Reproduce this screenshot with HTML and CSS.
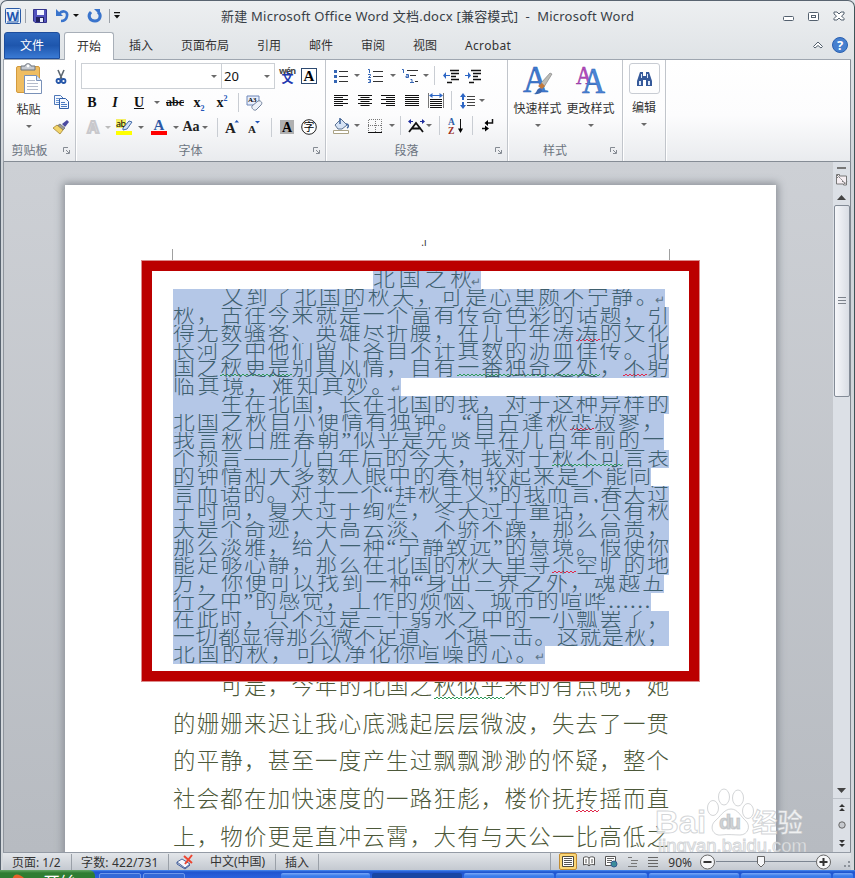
FILE: index.html
```html
<!DOCTYPE html>
<html lang="zh-CN">
<head>
<meta charset="utf-8">
<title>Microsoft Word</title>
<link rel="stylesheet" href="styles.css">
</head>
<body>
<div class="window">
  <header class="titlebar">
    <div class="quick">
      <svg width="16" height="16"><rect x=".5" y=".5" width="15" height="15" rx="1" fill="#e9f2fc" stroke="#2a5aa5"/><path d="M13 2v12M2 14h11" stroke="#2a5aa5"/><text x="1.5" y="12.5" font-size="13" font-weight="bold" fill="#1c55b0" textLength="12" lengthAdjust="spacingAndGlyphs">W</text></svg>
      <i class="qsep"></i>
      <svg width="14" height="14"><path d="M.5.5h13v13H2L.5 12z" fill="#5353bd" stroke="#34348c"/><path d="M4 1h7v5H4z" fill="#f3f5ff"/><path d="M3 8h8v5H3z" fill="#23235f"/><path d="M7 9h3v4H7z" fill="#e9ecfa"/></svg>
      <svg width="22" height="14"><path d="M0 0v7h7z" fill="#3a74cc"/><path d="M3 5C7 0 12 3 11 7c-.5 3-3 5-6 5" fill="none" stroke="#3a74cc" stroke-width="2.6"/><path d="M17 5h6l-3 3z" fill="#111"/></svg>
      <svg width="14" height="14"><path d="M6 0h6v6z" fill="#3a74cc"/><path d="M3 3C-1 7 2 12 7 12c5 0 7-6 3-9" fill="none" stroke="#3a74cc" stroke-width="3"/></svg>
      <i class="qsep"></i>
      <svg width="8" height="8" class="more"><path d="M1 0h6v1.3H1zM1 3h6L4 6.500z" fill="#111"/></svg>
    </div>
    <div class="title">新建 Microsoft Office Word 文档.docx [兼容模式]&nbsp; -&nbsp; Microsoft Word</div>
    <div class="controls">
      <svg width="12" height="12"><rect x=".5" y="6.500" width="10" height="4" rx="1" fill="#fff" stroke="#53606e"/></svg>
      <svg width="12" height="12"><rect x=".5" y="2.500" width="10" height="8" rx="1" fill="#fff" stroke="#53606e"/><rect x="3.500" y="5.500" width="4" height="2" fill="#fff" stroke="#53606e"/></svg>
      <svg width="12" height="12"><path d="M1 2h3l2 2 2-2h3v2L8.500 6 11 8.500V10H8L6 8l-2 2H1V8.500L3.500 6 1 4z" fill="#fff" stroke="#53606e"/></svg>
    </div>
  </header>
  <nav class="tabs">
    <span class="file">文件</span><span class="tab active">开始</span><span class="tab">插入</span><span class="tab">页面布局</span><span class="tab">引用</span><span class="tab">邮件</span><span class="tab">审阅</span><span class="tab">视图</span><span class="tab acro">Acrobat</span>
    <div class="help">
      <svg width="10" height="8"><path d="M.5 5.500L5 1l4.500 4.500L8 7 5 4.500 2 7z" fill="#fff" stroke="#53606e"/></svg>
      <svg width="16" height="16"><circle cx="8" cy="8" r="7.500" fill="#4680cf" stroke="#2a60b0"/><text x="8" y="13" font-size="13" font-weight="bold" fill="#fff" text-anchor="middle">?</text></svg>
    </div>
  </nav>
  <section class="ribbon">
    <div class="group clip">
      <div class="cliprow">
        <div class="paste">
          <svg width="26" height="30"><rect x=".5" y="2.500" width="23" height="26" rx="1.500" fill="#efbd62" stroke="#d39a3d"/><path d="M5 2h4c0-3 6-3 6 0h4v4H5z" fill="#c5c9d0" stroke="#6d747e"/><circle cx="12" cy="2" r="1.400" fill="#fff"/><path d="M8.500 11.500h12l5 5v13h-17z" fill="#fff" stroke="#7991b8"/><path d="M20.500 11.500v5h5" fill="#dbe6f5" stroke="#7991b8"/><path d="M11 16.500h8M11 19.500h11M11 22.500h11M11 25.500h11" stroke="#b5bccb"/></svg>
          <span>粘贴</span><i class="arr"></i>
        </div>
        <div class="cliptools">
          <svg width="10" height="14"><path d="M2 0l4 9M8 0L4 9" stroke="#5c6670" stroke-width="1.600"/><circle cx="2.500" cy="11" r="2" fill="none" stroke="#2455a8" stroke-width="1.800"/><circle cx="7.500" cy="11" r="2" fill="none" stroke="#2455a8" stroke-width="1.800"/></svg>
          <svg width="15" height="14"><path d="M.5.5h6l3 3v6h-9z" fill="#f4f8ff" stroke="#4f78b8"/><path d="M2 3.500h3M2 5.500h4M2 7.500h4" stroke="#6d96d2"/><path d="M5.500 3.500h6l3 3v7h-9z" fill="#f4f8ff" stroke="#2f5ea8"/><path d="M7 7.500h4M7 9.500h6M7 11.500h6" stroke="#4a7ac2"/></svg>
          <svg width="16" height="14"><path d="M9 4l5-4 2 2-4 5z" fill="#4a4aa0"/><path d="M7 4l5 4-2 2-6-4z" fill="#999" stroke="#555" stroke-width=".6"/><path d="M4 5l6 5-3 4-7-6z" fill="#f2d469" stroke="#9a7a28" stroke-width=".7"/></svg>
        </div>
      </div>
      <div class="gname"><span>剪贴板</span><svg class="launch" width="7" height="7"><path d="M.5 5V.5H5M3 3l3 3M6.500 3v3.500H3" fill="none" stroke="#858b93"/></svg></div>
    </div>
    <div class="group font">
      <div class="row fr1"><div class="combo"><i class="arr"></i></div><div class="combo"><span>20</span><i class="arr"></i></div>
        <svg width="17" height="16"><text x="0" y="5.500" font-size="9" font-weight="bold" fill="#444" textLength="17">wén</text><text x="2.500" y="15" font-size="12" font-weight="bold" fill="#2038b0" class="cjk">文</text></svg>
        <svg width="16" height="16"><rect x=".5" y=".5" width="15" height="15" fill="#fff" stroke="#2d4a70"/><text x="8" y="13" font-size="15" font-weight="bold" text-anchor="middle" class="serif">A</text></svg></div>
      <div class="row fr2 serif"><b>B</b><b><em>I</em></b><b><u>U</u></b><i class="arr"></i><b class="abc">abc</b><b class="xs">x<sub>2</sub></b><b class="xs">x<sup>2</sup></b><i class="vsep"></i>
        <svg width="17" height="16"><path d="M1 1h12v6l-5 3H1z" fill="#e8eefc" stroke="#6c86b8"/><text x="2" y="7" font-size="7" font-weight="bold">A3</text><path d="M6 11l6-5c3-1 5 2 3 4l-5 5c-2 1-5-2-4-4z" fill="#edf1f8" stroke="#71819c"/></svg></div>
      <div class="row fr3">
        <svg width="14" height="15"><text x="7" y="13" font-size="16" font-weight="bold" text-anchor="middle" fill="#fff" stroke="#c8c8cc" stroke-width="2">A</text></svg><i class="arr pale"></i>
        <svg width="17" height="16"><path d="M0 0h10v9H0z" fill="#f3ee63"/><text x="0" y="7.500" font-size="9" textLength="10">ab</text><path d="M7 9l6-7 3 1-5 7-4 1z" fill="#d0e1f8" stroke="#436ba8"/><path d="M0 12h16v4H0z" fill="#ff0"/></svg><i class="arr"></i>
        <svg width="16" height="16"><text x="8" y="10.500" font-size="15" font-weight="bold" text-anchor="middle" fill="#2c58a5" class="serif">A</text><path d="M0 12h16v4H0z" fill="#f00"/></svg><i class="arr"></i>
        <span class="case serif"><b>Aa</b><i class="arr"></i></span><i class="vsep"></i>
        <svg width="14" height="14"><text x="0" y="13" font-size="15" font-weight="bold" fill="#222" class="serif">A</text><path d="M9.500 2.500L11.700 0 14 2.500z" fill="#2255b8"/></svg>
        <svg width="12" height="14"><text x="0" y="13" font-size="11" font-weight="bold" fill="#222" class="serif">A</text><path d="M7 1h5L9.500 3.500z" fill="#2255b8"/></svg><i class="vsep"></i>
        <svg width="14" height="14"><path d="M0 0h14v14H0z" fill="#b0b0b0"/><text x="7" y="12" font-size="14" font-weight="bold" text-anchor="middle" class="serif">A</text></svg>
        <svg width="16" height="16"><circle cx="8" cy="8" r="7.300" fill="#fff" stroke="#222"/><text x="8" y="12" font-size="11" text-anchor="middle" class="cjk">字</text></svg></div>
      <div class="gname"><span>字体</span><svg class="launch" width="7" height="7"><path d="M.5 5V.5H5M3 3l3 3M6.500 3v3.500H3" fill="none" stroke="#858b93"/></svg></div>
    </div>
    <div class="group para">
      <div class="row pr1">
        <svg width="14" height="14"><path d="M5 2.500h9M5 7.500h9M5 12.500h9" stroke="#333"/><path d="M0 1h3v3H0zM0 6h3v3H0zM0 11h3v3H0z" fill="#3465b4"/></svg><i class="arr"></i>
        <svg width="15" height="14"><path d="M5 2.500h10M5 7.500h10M5 12.500h10" stroke="#333"/><path d="M0 .5h1.500V4M0 5.500h2.500v1L.5 8.500h2.500M0 10.500h2.500v3H0M1 12h1.500" fill="none" stroke="#3465b4"/></svg><i class="arr"></i>
        <svg width="16" height="14"><path d="M5 1.500h11M8 6.500h6M13 12.500h3" stroke="#333"/><path d="M0 .5h1.500V4M4 5.500h2.500v3H4v-1.500h2M8.500 10.500h1.500V14M8 13.500h4" fill="none" stroke="#3465b4"/></svg><i class="arr"></i><i class="vsep"></i>
        <svg width="16" height="14"><path d="M7 1.500h9M8 4.500h8M8 7.500h5M8 10.500h8M4 13.500h5" stroke="#111" stroke-width="1.500"/><path d="M7 6H3V3L0 6.500 3 10V7h4z" fill="#2d66c5"/></svg>
        <svg width="16" height="14"><path d="M6 1.500h10M8 4.500h8M8 7.500h5M8 10.500h8M4 13.500h5" stroke="#111" stroke-width="1.500"/><path d="M0 6h3V3l3 3.500L3 10V7H0z" fill="#2d66c5"/></svg></div>
      <div class="row pr2">
        <svg width="14" height="12"><path d="M0 .5h14M0 2.500h9M0 4.500h14M0 6.500h9M0 8.500h14M0 10.500h9" stroke="#111"/></svg>
        <svg width="14" height="12"><path d="M0 .5h14M2.500 2.500h9M0 4.500h14M2.500 6.500h9M0 8.500h14M2.500 10.500h9" stroke="#111"/></svg>
        <svg width="14" height="12"><path d="M0 .5h14M5 2.500h9M0 4.500h14M5 6.500h9M0 8.500h14M5 10.500h9" stroke="#111"/></svg>
        <svg width="14" height="12"><path d="M0 .5h14M0 2.500h14M0 4.500h14M0 6.500h14M0 8.500h14M0 10.500h14" stroke="#111"/></svg>
        <svg width="16" height="15"><path d="M.5 0v15M15.500 0v15" stroke="#777"/><path d="M2 6.500h12M2 8.500h12M2 10.500h12M2 12.500h12M2 14.500h12" stroke="#111"/><path d="M1 2.500L4.500 0v2h7V0L15 2.500 11.500 5V3h-7v2z" fill="#2d66c5"/></svg><i class="vsep"></i>
        <svg width="15" height="16"><path d="M7 3.500h8M7 6.500h8M7 9.500h8M7 12.500h8" stroke="#444"/><path d="M3 0l3 4H4v3H2V4H0zM3 16l3-4H4V9H2v3H0z" fill="#2d66c5"/></svg><i class="arr"></i></div>
      <div class="row pr3">
        <svg width="16" height="16"><path d="M2 7l6-6 6 6-5 4H5z" fill="#d6e3f5" stroke="#5c7292"/><path d="M7 6V0M13 6c3 0 3 3 1 4" stroke="#3d6299" fill="none" stroke-width="1.500"/><path d="M.5 12.500h15v3H.5z" fill="#fff" stroke="#aaa284"/></svg><i class="arr"></i>
        <svg width="14" height="14"><path d="M.5 14V.5h13V14M7.500 0v14M0 6.500h14" fill="none" stroke="#777" stroke-dasharray="1 1"/><path d="M0 13.500h14" stroke="#111"/></svg><i class="arr"></i><i class="vsep"></i>
        <svg width="17" height="14"><path d="M1 13l7-9 7 9M4 9.500h9" fill="none" stroke="#111" stroke-width="1.800"/><path d="M0 2.500L3 0v2h2v1H3v2zM17 2.500L14 0v2h-2v1h2v2z" fill="#1e2d9c"/></svg><i class="arr"></i><i class="vsep"></i>
        <svg width="16" height="16"><text x="0" y="7" font-size="9.500" font-weight="bold" fill="#2d5da8" class="serif">A</text><text x="0" y="15.500" font-size="9.500" font-weight="bold" fill="#9b2d22" class="serif">Z</text><path d="M12.500 1v12" stroke="#111"/><path d="M10 10.500h5L12.500 15z"/></svg><i class="vsep"></i>
        <svg width="12" height="13"><path d="M10.500 0v4H6M0 9.500h5" fill="none" stroke="#111" stroke-width="1.500"/><path d="M6 1v6L2.500 4zM3 6.500v6L7 9.500z"/></svg></div>
      <div class="gname"><span>段落</span><svg class="launch" width="7" height="7"><path d="M.5 5V.5H5M3 3l3 3M6.500 3v3.500H3" fill="none" stroke="#858b93"/></svg></div>
    </div>
    <div class="group style">
      <div class="bigs">
        <div class="big"><svg width="30" height="32"><text x="0" y="27" font-size="37" fill="#3f7bd0" stroke="#2e62b4" stroke-width=".6" textLength="25" lengthAdjust="spacingAndGlyphs" class="serif">A</text><path d="M18 18l9-10 2 1-8 13z" fill="#bcbcb6" stroke="#77777a" stroke-width=".6"/><path d="M10 29c4 0 3-5 7-6 4 2 2 7-7 6z" fill="#3a68b0"/><path d="M15 21l4-3 3 3-3 3z" fill="#c2793a"/></svg><span>快速样式</span><i class="arr"></i></div>
        <div class="big"><svg width="30" height="32"><text x="0" y="19" font-size="25" fill="#b64bc0" stroke="#8e3499" stroke-width=".5" textLength="16" lengthAdjust="spacingAndGlyphs" class="serif">A</text><text x="6" y="28" font-size="36" fill="#4b86d8" stroke="#2e62b4" stroke-width=".6" textLength="23" lengthAdjust="spacingAndGlyphs" class="serif">A</text></svg><span>更改样式</span><i class="arr"></i></div>
      </div>
      <div class="gname"><span>样式</span><svg class="launch" width="7" height="7"><path d="M.5 5V.5H5M3 3l3 3M6.500 3v3.500H3" fill="none" stroke="#858b93"/></svg></div>
    </div>
    <div class="group edit">
      <div class="editbox"><svg width="15" height="14"><path d="M3 0h3v4h3V0h3l3 9v5H9V8H6v6H0V9z" fill="#35599a"/><path d="M2 9h2v4H2zM11 9h2v4h-2zM4 2h1v4H4zM10 2h1v4h-1z" fill="#dce8fa"/></svg></div>
      <span>编辑</span><i class="arr"></i>
    </div>
  </section>
  <main class="work">
    <div class="canvas">
      <article class="page">
        <div class="header-mark">.ı</div>
        <div class="margin-marks"></div>
        <div class="text selected">
          <p class="title-line">北国之秋<i class="ret">↵</i></p>
          <p class="w492">　　又到了北国的秋天，可是心里颇不宁静。<i class="ret">↵</i></p>
          <p>秋，古往今来就是一个富有传奇色彩的话题，引</p>
          <p>得无数骚客、英雄尽折腰，在几十年涛<s class="red">涛</s>的文化</p>
          <p>长河之中他们留下各自不计其数的沥血佳传。北</p>
          <p>国之<s>秋更是</s>别具风情，自有<s>一番独奇之处</s>，<s class="red">不</s>躬</p>
          <p class="w228">临其境，难知其妙。<i class="ret">↵</i></p>
          <p>　　生在北国，长在北国的我，对于这种异样的</p>
          <p class="w491">北国之秋自小便情有独钟。“自古逢秋<s class="red">悲</s>寂寥，</p>
          <p class="w491">我言秋日胜春朝”似乎是先贤早在几百年前的一</p>
          <p>个预言——几百年后的今天，我对于<s>秋不可</s>言表</p>
          <p class="w478">的钟情和大多数人眼中的春相较起来是不能同</p>
          <p>言而语的。对于一个“拜秋主义”的我而言,春天过</p>
          <p>于时尚，夏天过于绚烂，冬天过于童话，只有秋</p>
          <p>天是个奇迹，天高云淡、不骄不躁，那么高贵，</p>
          <p>那么淡雅，给人一种“宁静致远”的意境。假使你</p>
          <p>能足够心静，那么在北国的秋天里寻<s class="red">个</s>空旷的地</p>
          <p class="w491">方，你便可以找到一种“身出三界之外，魂越五</p>
          <p class="w478">行之中”的感觉，工作的烦恼、城市的喧哗……</p>
          <p>在此时，只不过是三千弱水之中的一小瓢罢了，</p>
          <p>一切都显得那么微不足道、不堪一击。这就是秋，</p>
          <p class="w372">北国的秋，可以净化你喧噪的心。<i class="ret">↵</i></p>
        </div>
        <div class="text loose">
          <p>　　可是，今年的北国之<s>秋似乎</s>来的有点晚，她</p>
          <p>的姗姗来迟让我心底溅起层层微波，失去了一贯</p>
          <p>的平静，甚至一度产生过飘飘渺渺的怀疑，整个</p>
          <p>社会都在加快速度的一路狂彪，楼价抚<s class="red">抟</s>摇而直</p>
          <p>上，物价更是直冲云霄，大有与天公一比高低之</p>
        </div>
        <div class="frame"></div>
      </article>
    </div>
    <aside class="scroll">
      <div class="split"></div>
      <svg class="ruler" width="13" height="13"><path d="M1.500 3V1.500h3V3h7v9H8.500v-1h-7z" fill="#f5eef2" stroke="#777"/><path d="M2 2l8 8M7 8l3 3 2-3M2 5l3-3" fill="none" stroke="#777" stroke-dasharray="2 1"/></svg>
      <svg class="up" width="9" height="5"><path d="M0 5l4.500-5L9 5z" fill="#444"/></svg>
      <div class="thumb"><svg width="8" height="8"><path d="M0 .5h8M0 3.500h8M0 6.500h8" stroke="#7d838c"/></svg></div>
      <svg class="down" width="9" height="5"><path d="M0 0l4.500 5L9 0z" fill="#444"/></svg>
      <div class="browse">
        <svg width="6" height="8"><path d="M0 3l3-3 3 3zM0 7l3-3 3 3z" fill="#333"/></svg>
        <svg width="8" height="8"><circle cx="4" cy="4" r="3.200" fill="#c6c9ce" stroke="#666"/></svg>
        <svg width="6" height="8"><path d="M0 1l3 3 3-3zM0 5l3 3 3-3z" fill="#333"/></svg>
      </div>
    </aside>
    <svg class="watermark" width="156" height="74">
      <g fill="#fff" stroke="#b5b9bd" stroke-opacity=".6" fill-opacity=".8">
        <ellipse cx="58" cy="21" rx="5.500" ry="7.500"/><ellipse cx="69" cy="10" rx="5.500" ry="8"/><ellipse cx="83" cy="11" rx="5.500" ry="8"/><ellipse cx="93" cy="24" rx="5.500" ry="7.500"/>
        <path d="M76 22c7 0 10 8 15 12 5 5 2 14-6 14-5 0-12-1-19 0-8 1-12-8-6-14 5-4 9-12 16-12z"/>
        <text x="0" y="46" font-size="32" font-weight="bold" textLength="51" lengthAdjust="spacingAndGlyphs" class="mark">Bai</text>
        <text x="64" y="42" font-size="20" font-weight="bold" fill="#c4c7ca" textLength="22" class="mark">du</text>
        <text x="97" y="45" font-size="26" font-weight="bold" textLength="51" lengthAdjust="spacingAndGlyphs" class="cjk">经验</text>
        <text x="3" y="65" font-size="18" textLength="149" lengthAdjust="spacingAndGlyphs" class="mark">jingyan.baidu.com</text>
      </g>
    </svg>
  </main>
  <footer class="status">
    <span class="s1">页面: 1/2</span><span class="s2">字数: 422/731</span>
    <span class="s3"><svg width="17" height="14"><path d="M0 7l5-3 8 5-5 4z" fill="#f5f7fd" stroke="#51689b"/><path d="M0 7v2l8 5 5-4" fill="none" stroke="#3e5ca0"/><path d="M7 1l8 7M15 0L8 9" stroke="#ed4430" stroke-width="2"/></svg>中文(中国)</span><span class="s4">插入</span>
    <div class="views">
      <b class="on"><svg width="12" height="11"><path d="M.5.5h11v10H.5z" fill="#fff" stroke="#4f4a3a"/><path d="M2 2.500h8M2 4.500h8M2 6.500h8M2 8.500h8" stroke="#555"/></svg></b>
      <svg width="12" height="11"><path d="M.5 1.500c2-1 4-1 5.500.5 1.500-1.500 3.500-1.500 5.500-.5V9c-2-1-4-1-5.500 1C4.500 8 2.500 8 .5 9zM6 2v8M2 4h2M2 6h2M8 4h2M8 6h2" fill="#fff" stroke="#555"/></svg>
      <svg width="13" height="12"><path d="M.5.5h10v9H.5z" fill="#fff" stroke="#555"/><path d="M2 2.500h7M2 4.500h5M2 6.500h4" stroke="#666"/><circle cx="9" cy="8" r="3" fill="#3b8c9a" stroke="#315a90"/></svg>
      <svg width="10" height="10"><path d="M0 .5h4M3 3.500h7M3 6.500h6M0 9.500h9" stroke="#777"/></svg>
      <svg width="10" height="10"><path d="M0 .5h10M0 3.500h10M0 6.500h10M0 9.500h10" stroke="#666" stroke-width="1.200"/></svg>
    </div>
    <span class="pct">90%</span>
    <svg width="133" height="18"><path d="M17 8.500h100" stroke="#7c8591"/><circle cx="8.500" cy="9" r="7" fill="#f6f7f9" stroke="#666"/><path d="M4.500 9h8" stroke="#333" stroke-width="2"/><path d="M58.500 3.500h7v7L62 14l-3.500-3.500z" fill="#f6f7f9" stroke="#666"/><circle cx="124.500" cy="9" r="7" fill="#f6f7f9" stroke="#666"/><path d="M120.500 9h8M124.500 5v8" stroke="#333" stroke-width="2"/></svg>
    <svg class="grip" width="8" height="9"><path d="M5 1h2v2H5zM5 5h2v2H5zM1 5h2v2H1z" fill="#8c929a"/></svg>
  </footer>
</div>
<div class="taskbar"><span class="start"><svg width="12" height="6"><path d="M0 6c2-8 7-6 12-2v2z" fill="#e6622a"/></svg><em>开始</em></span><i class="t1"></i><i class="t2"></i><i class="t3"></i><i class="t4"></i><i class="dark"></i><i></i><i></i><i></i><i></i><i class="t5"></i></div>
</body>
</html>
```
FILE: styles.css
```css
* { box-sizing: border-box; }
body { margin: 0; width: 855px; height: 878px; overflow: hidden; background: #e1e4e8; font: 12px "Noto Sans", "Noto Sans CJK SC", sans-serif; color: #333; }
svg { display: block; flex: none; overflow: visible; }
i { font-style: normal; }
.cjk { font-family: "Noto Sans CJK SC", sans-serif; }
.serif { font-family: "Liberation Serif", serif; }
.mark { font-family: "Liberation Sans", sans-serif; }
.window { width: 855px; height: 870px; display: flex; flex-direction: column; border-top: 1px solid #596470; border-left: 1px solid #596470; border-right: 1px solid #3f5458; border-radius: 7px 7px 0 0; background: linear-gradient(#edeff1, #dfe3e6 60px, #cfd4d9 165px, #d4d8dc); padding: 0 3px 0 2px; }

.titlebar { height: 30px; display: flex; position: relative; align-items: center; }
.quick { display: flex; align-items: center; padding-left: 2px; margin-top: -1px; }
.qsep { width: 1px; height: 14px; background: #9aa0a8; }
.quick .qsep { margin: 0 7px 0 4px; }
.quick svg:nth-of-type(2) { margin-right: 9px; }
.quick svg:nth-of-type(3) { margin-right: 10px; }
.quick svg:nth-of-type(4) { margin-right: 3px; }
.quick .qsep + .more { margin-left: -4px; }
.title { position: absolute; left: 218px; top: 6px; font-size: 13px; line-height: 18px; white-space: nowrap; letter-spacing: .23px; color: #383e46; }
.controls { margin-left: auto; display: flex; gap: 13px; padding-right: 6px; }

.tabs { height: 29px; display: flex; align-items: stretch; padding-left: 1px; border-bottom: 1px solid #9ea6b0; }
.tabs span { line-height: 29px; text-align: center; }
.file { width: 56px; margin-top: 1px; height: 27px; background: linear-gradient(#2d69bf, #1e56ad 50%, #3a7ad4); color: #fff; border: 1px solid #1d4d9c; border-radius: 3px 3px 0 0; }
.tabs .file { line-height: 26px; margin-right: 4px; }
.tab { padding: 0 14px; }
.acro { letter-spacing: .3px; }
.tabs .active { background: #fff; border: 1px solid #a8afb8; border-bottom: 0; border-radius: 3px 3px 0 0; width: 50px; padding: 0; margin: 1px 1px -1px 0; line-height: 27px; height: 29px; }
.help { margin-left: auto; display: flex; align-items: center; gap: 9px; padding-right: 3px; }

.ribbon { height: 102px; display: flex; background: linear-gradient(#fff, #fcfcfd 55%, #e9ebee); border-bottom: 1px solid #858c95; border-right: 1px solid #858c95; border-left: 1px solid #a0a6ae; }
.group { border-right: 1px solid #c1c5cb; box-shadow: 1px 0 #fff; display: flex; flex-direction: column; padding-top: 4px; position: relative; }
.clip { width: 72px; } .font { width: 250px; } .para { width: 182px; } .style { width: 115px; } .edit { width: 43px; align-items: center; }
.gname { margin-top: auto; height: 20px; line-height: 19px; text-align: center; color: #6b7480; position: relative; padding-right: 20px; }
.launch { position: absolute; right: 5px; top: 6px; }
.arr { width: 0; height: 0; border: 3px solid transparent; border-top: 3px solid #6a6a6a; border-bottom: 0; flex: none; align-self: center; }
.arr.pale { border-top-color: #bbb; }
.vsep { width: 1px; height: 19px; background: #c9cdd3; }
.cliprow { display: flex; }
.paste { width: 46px; display: flex; flex-direction: column; align-items: center; padding-left: 3px; }
.paste span { line-height: 18px; margin: 7px 0 6px; }
.cliptools { width: 22px; display: flex; flex-direction: column; align-items: center; gap: 11px; padding-top: 6px; }
.row { display: grid; align-items: center; justify-items: center; height: 25px; }
.font .row { margin-left: 5px; height: 26px; }
.font { padding-top: 3px; }
.font .fr2 { height: 27px; }
.fr1 { grid-template-columns: 140px 54px 24px 20px; }
.combo { width: 100%; height: 26px; border: 1px solid #ccd0d5; background: #fff; display: flex; align-items: center; justify-content: space-between; padding: 0 4px 0 2px; font-size: 13px; color: #111; }
.combo .arr:only-child { margin-left: auto; }
.font .fr1 .combo:first-child { border-right: 0; }
.fr2 { grid-template-columns: 22px 24px 24px 12px 24px 24px 22px 10px 22px; color: #111; font-size: 14px; }
.abc { font-size: 12px; text-decoration: line-through; }
.xs sub, .xs sup { font-size: 8px; color: #2255b8; line-height: 0; }
.fr3 { grid-template-columns: 24px 5px 28px 6px 30px 4px 34px 10px 20px 24px 10px 22px 22px; }
.font .fr3 { height: 22px; }
.case { display: flex; gap: 2px; font-size: 14px; color: #222; }
.para .row { margin-left: 3px; }
.para { padding-top: 3px; }
.pr1 { grid-template-columns: 24px 7px 30px 6px 28px 4px 13px 20px 24px; }
.pr2 { grid-template-columns: 24px 23px 24px 24px 23px 8px 25px 4px; }
.pr3 { grid-template-columns: 24px 7px 29px 6px 10px 22px 4px 16px 18px 14px 18px; }
.bigs { display: flex; padding: 1px 0 0 3px; }
.big { width: 53px; display: flex; flex-direction: column; align-items: center; }
.big span { line-height: 18px; white-space: nowrap; margin: 3px 0 6px; }
.editbox { width: 31px; height: 31px; border: 1px solid #c8ccd3; border-radius: 3px; display: grid; place-items: center; margin: -1px 0 5px; }
.edit > span { line-height: 18px; }
.edit > .arr { margin-top: 6px; }

.work { flex: 1; min-height: 0; display: flex; position: relative; overflow: hidden; border-left: 1px solid #8f959d; border-right: 1px solid #7f868f; }
.canvas { flex: 1; background: linear-gradient(#cdd0d5, #b7bbc1); padding: 23px 0 0 61px; overflow: hidden; }
.page { width: 711px; height: 800px; background: #fff; box-shadow: 0 0 8px 2px #8a8f96; position: relative; }
.header-mark { height: 64px; padding-top: 50px; padding-left: 7px; text-align: center; font-size: 10px; line-height: 14px; }
.margin-marks { height: 22px; width: 498px; margin-left: 107px; border: solid #a0a0a0; border-width: 0 1px; }
.text { margin-left: 108px; width: 496px; font: 300 22.4px/22px "Liberation Serif", "Noto Sans CJK SC", serif; }
.text p { margin: 0; width: 496px; white-space: nowrap; text-align: justify; text-align-last: justify; text-spacing-trim: space-all; }
.selected { color: #3f6070; font-size: 21.8px; }
.selected p { height: 17.89px; overflow: hidden; background: #b4c7e7; display: flow-root; line-height: 16px; }
.selected .title-line { width: 108px; margin-left: 200px; }
.selected .w492 { width: 492px; } .selected .w491 { width: 491px; } .selected .w478 { width: 478px; } .selected .w228 { width: 228px; } .selected .w372 { width: 372px; }
.ret { font-size: 12px; margin-left: -5px; color: #5d7488; }
.loose { color: #4c5839; padding-top: 4px; }
.loose p { line-height: 37.6px; }
s { --ink: #2f9a5b; --y: 100%; text-decoration: none; background: repeating-linear-gradient(90deg, var(--ink) 0 2px, transparent 2px 4px) 0 var(--y) / 100% 1px no-repeat, repeating-linear-gradient(90deg, transparent 0 2px, var(--ink) 2px 4px) 0 calc(var(--y) - 1px) / 100% 1px no-repeat; }
.selected s { --y: calc(100% - 4px); }
s.red { --ink: #e02a4c; }
.frame { position: absolute; left: 77px; top: 76px; width: 557px; height: 420px; border: 10px solid #bb0000; outline: 1px solid #dc8c8c; }
.scroll { width: 17px; background: #dce0e6; display: flex; flex-direction: column; align-items: center; }
.split { width: 9px; height: 2px; background: #777; margin-top: 5px; }
.ruler { margin: 4px 0 2px; }
.up { margin: 7px 0 5px; }
.thumb { width: 16px; height: 192px; border: 1px solid #838b96; border-radius: 2px; background: linear-gradient(90deg, #f6f7fa, #d9dde4); display: grid; place-items: center; }
.down { margin-top: auto; }
.browse { height: 54px; margin-top: 5px; width: 100%; border-top: 1px solid #bcc1c8; display: flex; flex-direction: column; align-items: center; justify-content: space-around; }
.watermark { position: absolute; left: 651px; top: 625px; }

.status { height: 18px; display: flex; align-items: center; background: linear-gradient(#e3e6ea, #c4c9d0); border-top: 1px solid #949ba5; white-space: nowrap; line-height: 17px; }
.status span { border-right: 1px solid #9aa0a8; height: 16px; line-height: 17px; padding-left: 9px; }
.status .s1 { width: 69px; } .status .s2 { width: 97px; letter-spacing: .15px; }
.status .s3 { width: 107px; display: flex; align-items: center; gap: 16px; line-height: 18px; padding-left: 8px; } .status .s4 { width: 43px; }
.views { margin-left: auto; display: flex; align-items: center; gap: 10px; border-left: 1px solid #9aa0a8; padding-left: 8px; }
.on { background: #fbd777; border: 1px solid #c18b30; border-radius: 2px; padding: 2px; width: 18px; height: 17px; margin-right: -4px; }
.status .pct { border: 0; padding: 0; margin: 0 7px 0 10px; }
.grip { margin-left: 11px; margin-top: 5px; }
.taskbar { height: 8px; background: linear-gradient(#4a8cf0, #1f55cf 2px, #2a62de); display: flex; overflow: hidden; }
.taskbar i { height: 6px; margin-top: 3px; width: 91px; margin-right: 2px; border-radius: 2px 2px 0 0; background: linear-gradient(#78a8f8, #3b7bea 3px); }
.taskbar .t1 { width: 42px; margin-left: 4px; background: #3269d8; border: 1px solid #6d98ea; } .taskbar .t2 { width: 42px; background: #3269d8; border: 1px solid #6d98ea; }
.taskbar .t3 { width: 93px; background: none; } .taskbar .t4 { width: 90px; } .taskbar .dark { background: #1846a4; } .taskbar .t5 { width: 20px; }
.start { width: 96px; height: 8px; background: linear-gradient(#64a966, #2f7d32 3px); border-radius: 0 6px 0 0; display: flex; overflow: hidden; }
.start svg { margin: 4px 16px 0 12px; }
.start em { color: #fff; font: italic 17px/24px "Noto Sans CJK SC", sans-serif; }
```
